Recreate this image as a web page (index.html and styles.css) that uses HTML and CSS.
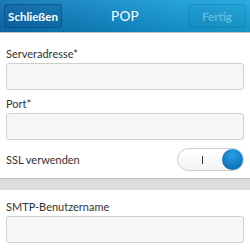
FILE: index.html
```html
<!DOCTYPE html>
<html>
<head>
<meta charset="utf-8">
<link rel="stylesheet" href="styles.css">
</head>
<body>
  <div class="titlebar">
    <button class="tb-btn">Schließen</button>
    <div class="tb-title">POP</div>
    <button class="tb-btn disabled">Fertig</button>
  </div>

  <div class="section">
    <label class="field-label">Serveradresse*</label>
    <div class="field"></div>
    <label class="field-label next">Port*</label>
    <div class="field"></div>
    <div class="toggle-row">
      <span>SSL verwenden</span>
      <div class="toggle">
        <span class="toggle-mark"></span>
        <span class="toggle-knob"></span>
      </div>
    </div>
  </div>

  <div class="divider"></div>

  <div class="section second">
    <label class="field-label">SMTP-Benutzername</label>
    <div class="field"></div>
    <label class="field-label next">SMTP-Kennwort</label>
    <div class="field"></div>
  </div>
</body>
</html>
```

FILE: styles.css
```css
html, body {
  margin: 0;
  padding: 0;
  background: #fff;
  overflow: hidden;
}

body {
  font-family: Lato, "Open Sans", sans-serif;
  color: #333;
}

/** TITLE BAR **/
.titlebar {
  height: 32px;
  display: flex;
  align-items: center;
  justify-content: space-between;
  padding: 0 4px;
  border-bottom: 1px solid #b9c3c9;
  background: linear-gradient(to bottom, rgba(255,255,255,0.08), rgba(0,0,0,0.1)),
              linear-gradient(to right, #0b6fb1, #139bd6 70%, #18a6dc);
}

.tb-btn {
  width: 58px;
  height: 24px;
  padding: 0;
  font-family: Lato, sans-serif;
  font-size: 11.5px;
  font-weight: bold;
  color: #fff;
  background: rgba(0, 60, 110, 0.18);
  border: 1px solid rgba(0, 50, 100, 0.35);
  border-radius: 3px;
}

.tb-btn.disabled {
  color: rgba(160, 215, 240, 0.55);
  background: rgba(0, 60, 110, 0.05);
  border-color: rgba(0, 60, 110, 0.14);
}

.tb-title {
  color: #fff;
  font-size: 13.5px;
  letter-spacing: 0.3px;
}

/** FORM **/
.section {
  padding: 15px 6px 0 6px;
}

.section.second {
  padding-top: 11px;
}

.field-label {
  display: block;
  font-size: 11px;
  line-height: 12px;
  margin-bottom: 3px;
}

.field-label.next {
  margin-top: 8px;
}

.second .field-label.next {
  margin-top: 5px;
}

.field {
  height: 25px;
  border: 1px solid #cfcfcf;
  border-radius: 3px;
  background: #f6f6f6;
}

.toggle-row {
  height: 37px;
  display: flex;
  align-items: center;
  justify-content: space-between;
  font-size: 11px;
  margin-top: 1px;
}

.toggle {
  position: relative;
  width: 65px;
  height: 21px;
  border: 1px solid #cdcdcd;
  border-radius: 12px;
  background: linear-gradient(to bottom, #fff, #f4f4f4);
}

.toggle-mark {
  position: absolute;
  left: 24px;
  top: 7px;
  width: 1px;
  height: 8px;
  background: #333;
}

.toggle-knob {
  position: absolute;
  right: 0;
  top: 0;
  width: 21px;
  height: 21px;
  border-radius: 50%;
  background: radial-gradient(circle at 50% 30%, #2aa0e4, #0a6fb8 80%);
}

.divider {
  height: 11px;
  border-top: 1px solid #c4c4c8;
  background: #dcdcdf;
}
```
